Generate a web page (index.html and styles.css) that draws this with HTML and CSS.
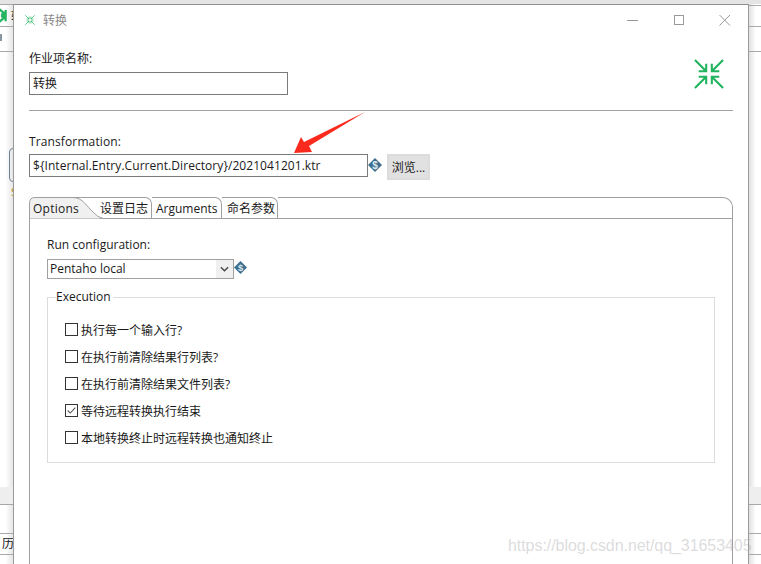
FILE: index.html
```html
<!DOCTYPE html>
<html lang="zh">
<head>
<meta charset="utf-8">
<title>转换</title>
<link rel="stylesheet" href="styles.css">
</head>
<body>
<div class="desktop">
  <div class="back back-left">
    <svg class="back-icon" viewBox="0 0 16 16"><g fill="none" stroke="#22b35e" stroke-width="2.400"><path d="M-1 1 6 7M6 2V7H1"/><path d="M-1 15 6 9M1 9H6V14"/></g></svg>
    <span class="back-glyph">转</span>
    <span class="back-mark"></span>
    <div class="back-box"></div>
    <span class="back-dollar">$</span>
    <span class="back-his">历</span>
  </div>
  <div class="back back-right"></div>
  <div class="topband"></div>

  <section class="window">
    <header class="titlebar">
      <svg class="title-icon" viewBox="0 0 32 32"><use href="#shrink"/></svg>
      <span class="title-text">转换</span>
      <div class="win-buttons">
        <svg class="win-btn" viewBox="0 0 12 12"><path d="M0 6.500H11" stroke="#999" stroke-width="1"/></svg>
        <svg class="win-btn" viewBox="0 0 12 12"><rect x="1.500" y="1.500" width="9" height="9" fill="none" stroke="#999"/></svg>
        <svg class="win-btn" viewBox="0 0 12 12"><path d="M.5 1 11 11.500M11 1 .5 11.500" stroke="#999" fill="none"/></svg>
      </div>
    </header>

    <div class="name-row">
      <div class="name-fields">
        <label class="label">作业项名称:</label>
        <div class="input input-name">转换</div>
      </div>
      <svg class="big-icon" viewBox="0 0 32 32">
        <defs>
          <g id="shrink" fill="none" stroke="#22b35e" stroke-width="2.200">
            <path d="M1 1 13 13M13 5V13H5"/>
            <path d="M31 1 19 13M19 5V13H27"/>
            <path d="M1 31 13 19M5 19H13V27"/>
            <path d="M31 31 19 19M27 19H19V27"/>
          </g>
        </defs>
        <use href="#shrink"/>
      </svg>
    </div>

    <hr class="sep">

    <label class="label label-trans">Transformation:</label>
    <div class="trans-row">
      <div class="input input-trans">${Internal.Entry.Current.Directory}/2021041201.ktr</div>
      <svg class="var-icon" viewBox="0 0 14 14"><path d="M7 0 14 7 7 14 0 7Z" fill="#3f6f8f"/><text x="7" y="10.500" class="var-text">$</text></svg>
      <button class="browse">浏览...</button>
    </div>

    <div class="tabs">
      <div class="tabstrip">
        <div class="tab tab-active">
          <svg class="tab-shape" viewBox="0 0 74 22" preserveAspectRatio="none"><path d="M.5 22V6Q.5 .5 6 .5H44C54 .5 58 10 64 15Q68 20 74 21.500V22Z" fill="#f0f0f0" stroke="#a0a0a0"/><path d="M44 .5H74" stroke="#a0a0a0" fill="none"/></svg>
          <span class="tab-label">Options</span>
        </div>
        <div class="tab tab-log">设置日志</div>
        <div class="tab tab-args">Arguments</div>
        <div class="tab tab-named">命名参数</div>
        <div class="tab-rest"></div>
      </div>
      <div class="tab-body">
        <label class="label label-run">Run configuration:</label>
        <div class="run-row">
          <div class="select">
            <span>Pentaho local</span>
            <span class="select-arrow"><svg viewBox="0 0 10 6" class="chev"><path d="M1 1 5 5 9 1" fill="none" stroke="#444" stroke-width="1.500"/></svg></span>
          </div>
          <svg class="var-icon var-run" viewBox="0 0 14 14"><path d="M7 0 14 7 7 14 0 7Z" fill="#3f6f8f"/><text x="7" y="10.500" class="var-text">$</text></svg>
        </div>
        <fieldset class="exec">
          <legend class="exec-legend">Execution</legend>
          <div class="check"><span class="box"></span>执行每一个输入行?</div>
          <div class="check"><span class="box"></span>在执行前清除结果行列表?</div>
          <div class="check"><span class="box"></span>在执行前清除结果文件列表?</div>
          <div class="check"><span class="box"><svg viewBox="0 0 13 13" class="tick"><path d="M2 6.500 5 9.500 11 3" fill="none" stroke="#555" stroke-width="1.300"/></svg></span>等待远程转换执行结束</div>
          <div class="check"><span class="box"></span>本地转换终止时远程转换也通知终止</div>
        </fieldset>
      </div>
    </div>
  </section>

  <svg class="arrow" viewBox="0 0 761 564"><path d="M294 153 301 137 304 142 365 112 309 146 312 152Z" fill="#fb2a1e"/></svg>
  <div class="watermark">https://blog.csdn.net/qq_31653405</div>
</div>
</body>
</html>
```
FILE: styles.css
```css
* { box-sizing: border-box; }
html, body { margin: 0; padding: 0; }
body {
  width: 761px;
  height: 564px;
  overflow: hidden;
  background: #fff;
  font-family: "Open Sans", "Noto Sans CJK SC", sans-serif;
  font-size: 12px;
  color: #1a1a1a;
}
.desktop { position: relative; width: 761px; height: 564px; overflow: hidden; background: #fff; }

.topband { position: absolute; left: 0; top: 0; width: 761px; height: 4px; background: #e4e4e4; }
.back { position: absolute; top: 0; height: 564px; }
.back-left {
  left: 0; width: 14px;
  background:
    linear-gradient(#eee, #eee) 0 487px / 100% 17px no-repeat,
    linear-gradient(#a8a8a8, #a8a8a8) 0 4px / 100% 1px no-repeat,
    linear-gradient(#a8a8a8, #a8a8a8) 0 26px / 100% 1px no-repeat,
    linear-gradient(#a8a8a8, #a8a8a8) 0 51px / 100% 1px no-repeat,
    linear-gradient(#a8a8a8, #a8a8a8) 0 504px / 100% 1px no-repeat,
    linear-gradient(#a8a8a8, #a8a8a8) 0 533px / 100% 1px no-repeat,
    linear-gradient(#a8a8a8, #a8a8a8) 0 554px / 100% 1px no-repeat,
    linear-gradient(90deg, #fff 40%, #e2e2e2) 0 0 / 100% 100% no-repeat;
}
.back-right {
  left: 748px; width: 13px;
  background:
    linear-gradient(#eee, #eee) 0 487px / 100% 17px no-repeat,
    linear-gradient(#a8a8a8, #a8a8a8) 0 5px / 100% 1px no-repeat,
    linear-gradient(#a8a8a8, #a8a8a8) 0 26px / 100% 1px no-repeat,
    linear-gradient(#a8a8a8, #a8a8a8) 0 51px / 100% 1px no-repeat,
    linear-gradient(#a8a8a8, #a8a8a8) 0 504px / 100% 1px no-repeat,
    linear-gradient(#a8a8a8, #a8a8a8) 0 533px / 100% 1px no-repeat,
    linear-gradient(#a8a8a8, #a8a8a8) 0 554px / 100% 1px no-repeat,
    linear-gradient(90deg, #dcdcdc, #fff 60%) 0 0 / 100% 100% no-repeat;
}
.back-icon { position: absolute; left: 0; top: 8px; width: 15px; height: 15px; }
.back-glyph { position: absolute; left: 11px; top: 9px; line-height: 16px; }
.back-mark { position: absolute; left: 0; top: 34px; width: 2px; height: 7px; background: #8a97a3; }
.back-box { position: absolute; left: 9px; top: 148px; width: 8px; height: 34px; border: 1px solid #6f8296; border-radius: 4px; }
.back-dollar { position: absolute; left: 11px; top: 184px; font-size: 12px; color: #b8860b; }
.back-his { position: absolute; left: 2px; top: 536px; font-size: 12px; line-height: 16px; }

.window {
  position: absolute;
  left: 13px;
  top: 4px;
  width: 736px;
  height: 600px;
  background: #fff;
  border: 1px solid #9a9a9a;
  border-top: 1px solid #8f8f8f;
  padding: 0 15px;
  display: flex;
  flex-direction: column;
}

.titlebar { display: flex; align-items: center; height: 29px; margin: 0 0 0 -4px; padding-top: 1px; }
.title-icon { width: 10px; height: 10px; margin-right: 8px; }
.title-text { color: #8a8a8a; font-size: 12px; }
.win-buttons { margin-left: auto; display: flex; gap: 34px; margin-right: 2px; margin-top: -1px; }
.win-btn { width: 12px; height: 12px; }

.name-row { display: flex; justify-content: space-between; align-items: flex-start; height: 59px; margin-top: 17px; padding-right: 9px; }
.name-fields { display: flex; flex-direction: column; }
.label { display: block; line-height: 16px; }
.input { border: 1px solid #7a7a7a; background: #fff; height: 23px; line-height: 21px; padding-left: 3px; white-space: nowrap; overflow: hidden; }
.input-name { width: 259px; margin-top: 5px; }
.big-icon { width: 30px; height: 32px; margin-top: 7px; }

.sep { width: 704px; height: 1px; margin: 0; border: 0; background: #a0a0a0; }

.label-trans { margin-top: 23px; letter-spacing: .12px; }
.trans-row { display: flex; align-items: flex-start; margin-top: 4px; height: 26px; }
.input-trans { width: 339px; letter-spacing: .06px; }
.var-icon { width: 14px; height: 14px; margin: 4px 0 0 0; flex: none; }
.var-text { font: bold 10px "Liberation Sans", sans-serif; fill: #dfe8ef; text-anchor: middle; }
.browse {
  width: 43px; height: 26px; margin-left: 5px; padding: 0;
  border: 2px solid #dcdcdc; background: #e1e1e1;
  font: inherit; color: #1a1a1a;
}

.tabs { display: flex; flex-direction: column; width: 704px; margin-top: 17px; flex: 1; }
.tabstrip { display: flex; height: 22px; align-items: stretch; }
.tab { border-top: 1px solid #a0a0a0; border-bottom: 1px solid #a0a0a0; border-right: 1px solid #a0a0a0; border-top-right-radius: 7px; display: flex; align-items: center; padding-left: 0; }
.tab-active { position: relative; width: 71px; border: 0; padding-left: 4px; letter-spacing: .25px; }
.tab-shape { position: absolute; left: 0; top: 0; width: 74px; height: 22px; }
.tab-label { position: relative; }
.tab-log { width: 52px; padding-left: 0; position: relative; }
.tab-args { width: 70px; padding-left: 4px; }
.tab-named { width: 56px; padding-left: 5px; }
.tab-rest {
  flex: 1;
  border-bottom: 1px solid #a0a0a0;
  position: relative;
  border-top: 1px solid #a0a0a0;
  border-right: 1px solid #a0a0a0;
  border-top-right-radius: 10px;
}
.tab-body { flex: 1; border: 1px solid #a0a0a0; border-top: 0; padding: 18px 17px 0; }
.label-run { line-height: 16px; }
.run-row { display: flex; align-items: flex-start; margin-top: 6px; }
.select { width: 187px; height: 20px; border: 1px solid #a0a0a0; display: flex; justify-content: space-between; padding-left: 2px; line-height: 18px; }
.select-arrow { width: 17px; height: 18px; background: #f0f0f0; display: flex; align-items: center; justify-content: center; }
.chev { width: 9px; height: 6px; }
.var-run { margin: 2px 0 0 0; width: 13px; height: 13px; }

.exec { margin: 10px 0 0; width: 668px; height: 174px; border: 1px solid #dcdcdc; padding: 11px 0 0 17px; display: block; }
.exec-legend { padding: 0 2px 0 0; margin-left: -9px; line-height: 16px; }
.check { display: flex; align-items: center; height: 27px; }
.box { width: 13px; height: 13px; border: 1px solid #333; margin-right: 3px; flex: none; background: #fff; display: flex; }
.tick { width: 11px; height: 11px; }

.arrow { position: absolute; left: 0; top: 0; width: 761px; height: 564px; pointer-events: none; }
.watermark {
  position: absolute;
  left: 508px;
  top: 537px;
  font-family: "Liberation Sans", sans-serif;
  font-size: 16px;
  letter-spacing: -.06px;
  line-height: 18px;
  color: rgba(170, 170, 170, .42);
  white-space: nowrap;
}
```
